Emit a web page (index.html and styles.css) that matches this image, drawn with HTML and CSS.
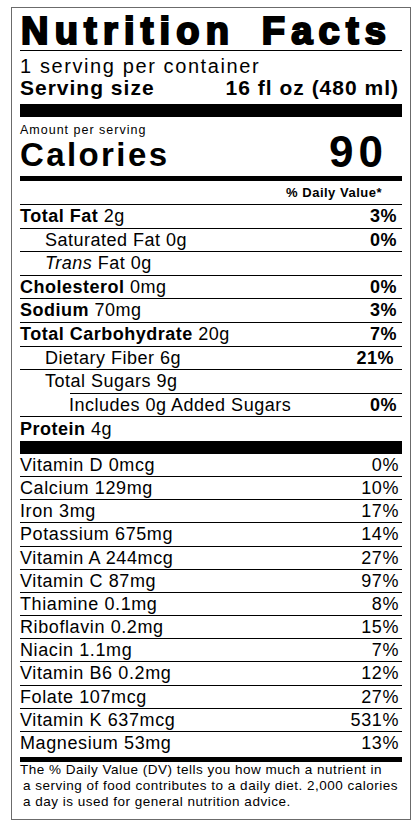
FILE: index.html
```html
<!DOCTYPE html>
<html lang="en">
<head>
    <meta charset="UTF-8">
    <meta name="viewport" content="width=device-width, initial-scale=1.0">
    <title>Nutrition Facts</title>
    <link rel="stylesheet" href="styles.css">
</head>
<body>
    <div class="label">
        <h1 class="title">Nutrition Facts</h1>

        <div class="serving">
            <p class="servings">1 serving per container</p>
            <p class="serving-size"><span>Serving size</span><span>16 fl oz (480 ml)</span></p>
        </div>

        <div class="calories">
            <div>
                <p class="amount">Amount per serving</p>
                <p class="calories-label">Calories</p>
            </div>
            <p class="calories-value">90</p>
        </div>

        <p class="dv-head">% Daily Value*</p>

        <ul class="nutrients">
            <li class="row"><span><b>Total Fat</b> 2g</span><b>3%</b></li>
            <li class="row sub"><span>Saturated Fat 0g</span><b>0%</b></li>
            <li class="row sub"><span><i>Trans</i> Fat 0g</span></li>
            <li class="row"><span><b>Cholesterol</b> 0mg</span><b>0%</b></li>
            <li class="row"><span><b>Sodium</b> 70mg</span><b>3%</b></li>
            <li class="row"><span><b>Total Carbohydrate</b> 20g</span><b>7%</b></li>
            <li class="row sub"><span>Dietary Fiber 6g</span><b class="shift">21%</b></li>
            <li class="row sub short-line"><span>Total Sugars 9g</span></li>
            <li class="row subsub"><span>Includes 0g Added Sugars</span><b>0%</b></li>
            <li class="row protein"><span><b>Protein</b> 4g</span></li>
        </ul>

        <ul class="vitamins">
            <li class="row"><span>Vitamin D 0mcg</span><span>0%</span></li>
            <li class="row"><span>Calcium 129mg</span><span>10%</span></li>
            <li class="row"><span>Iron 3mg</span><span>17%</span></li>
            <li class="row"><span>Potassium 675mg</span><span>14%</span></li>
            <li class="row"><span>Vitamin A 244mcg</span><span>27%</span></li>
            <li class="row"><span>Vitamin C 87mg</span><span>97%</span></li>
            <li class="row"><span>Thiamine 0.1mg</span><span>8%</span></li>
            <li class="row"><span>Riboflavin 0.2mg</span><span>15%</span></li>
            <li class="row"><span>Niacin 1.1mg</span><span>7%</span></li>
            <li class="row"><span>Vitamin B6 0.2mg</span><span>12%</span></li>
            <li class="row"><span>Folate 107mcg</span><span>27%</span></li>
            <li class="row"><span>Vitamin K 637mcg</span><span>531%</span></li>
            <li class="row last"><span>Magnesium 53mg</span><span>13%</span></li>
        </ul>

        <p class="footnote">The % Daily Value (DV) tells you how much a nutrient in<br>a serving of food contributes to a daily diet. 2,000 calories<br>a day is used for general nutrition advice.</p>
    </div>
</body>
</html>
```

FILE: styles.css
```css
* {
    box-sizing: border-box;
    margin: 0;
    padding: 0;
}

body {
    background: #fff;
    color: #000;
    font-family: "Liberation Sans", Arial, sans-serif;
}

.label {
    width: 400px;
    margin: 7px 0 0 11px;
    padding: 4px 8px 9px;
    border: 1px solid #6b6b6b;
}

/* titulo */
.title {
    font-size: 38px;
    line-height: 38px;
    font-weight: bold;
    letter-spacing: 6.2px;
    word-spacing: 10px;
    white-space: nowrap;
    -webkit-text-stroke: 2.2px #000;
    padding-left: 1px;
    border-bottom: 1px solid #000;
}

/* porcao */
.serving {
    padding: 4px 0 5px;
    border-bottom: 13px solid #000;
}

.servings {
    font-size: 20px;
    line-height: 22px;
    letter-spacing: 1.6px;
}

.serving-size {
    display: flex;
    justify-content: space-between;
    font-size: 21px;
    line-height: 22px;
    font-weight: bold;
    letter-spacing: 1px;
    padding-right: 3px;
}

/* calorias */
.calories {
    display: flex;
    justify-content: space-between;
    align-items: flex-end;
    padding: 6px 0 4px;
    border-bottom: 5px solid #000;
}

.amount {
    font-size: 12.5px;
    line-height: 14px;
    letter-spacing: 1px;
}

.calories-label {
    font-size: 33px;
    line-height: 35px;
    font-weight: bold;
    letter-spacing: 2.4px;
}

.calories-value {
    font-size: 44px;
    line-height: 41px;
    font-weight: bold;
    letter-spacing: 5px;
    padding-right: 14px;
}

.dv-head {
    text-align: right;
    font-size: 13px;
    line-height: 16px;
    font-weight: bold;
    letter-spacing: 0.5px;
    padding: 4px 20px 3px 0;
    border-bottom: 1px solid #000;
}

/* linhas */
ul {
    list-style: none;
}

.row {
    display: flex;
    justify-content: space-between;
    white-space: nowrap;
    border-bottom: 1px solid #000;
}

.nutrients .row {
    font-size: 18px;
    line-height: 22.6px;
    letter-spacing: 0.5px;
    padding-right: 5px;
}

.row.sub {
    padding-left: 25px;
}

.row.subsub {
    padding-left: 49px;
}

.row .shift {
    margin-right: 3px;
}

.row.short-line {
    border-bottom: none;
    padding-bottom: 1px;
    background: linear-gradient(#000, #000) no-repeat right bottom / calc(100% - 50px) 1px;
}

.row.protein {
    padding-top: 1px;
    border-bottom: 13px solid #000;
}

.vitamins .row {
    font-size: 18px;
    line-height: 22.17px;
    letter-spacing: 0.6px;
    padding-right: 3px;
}

.vitamins .row.last {
    padding-bottom: 2.5px;
    border-bottom: 5px solid #000;
}

/* nota */
.footnote {
    font-size: 13.5px;
    line-height: 16px;
    letter-spacing: 0.5px;
    white-space: nowrap;
    padding-left: 3px;
    text-indent: -3px;
}
```
